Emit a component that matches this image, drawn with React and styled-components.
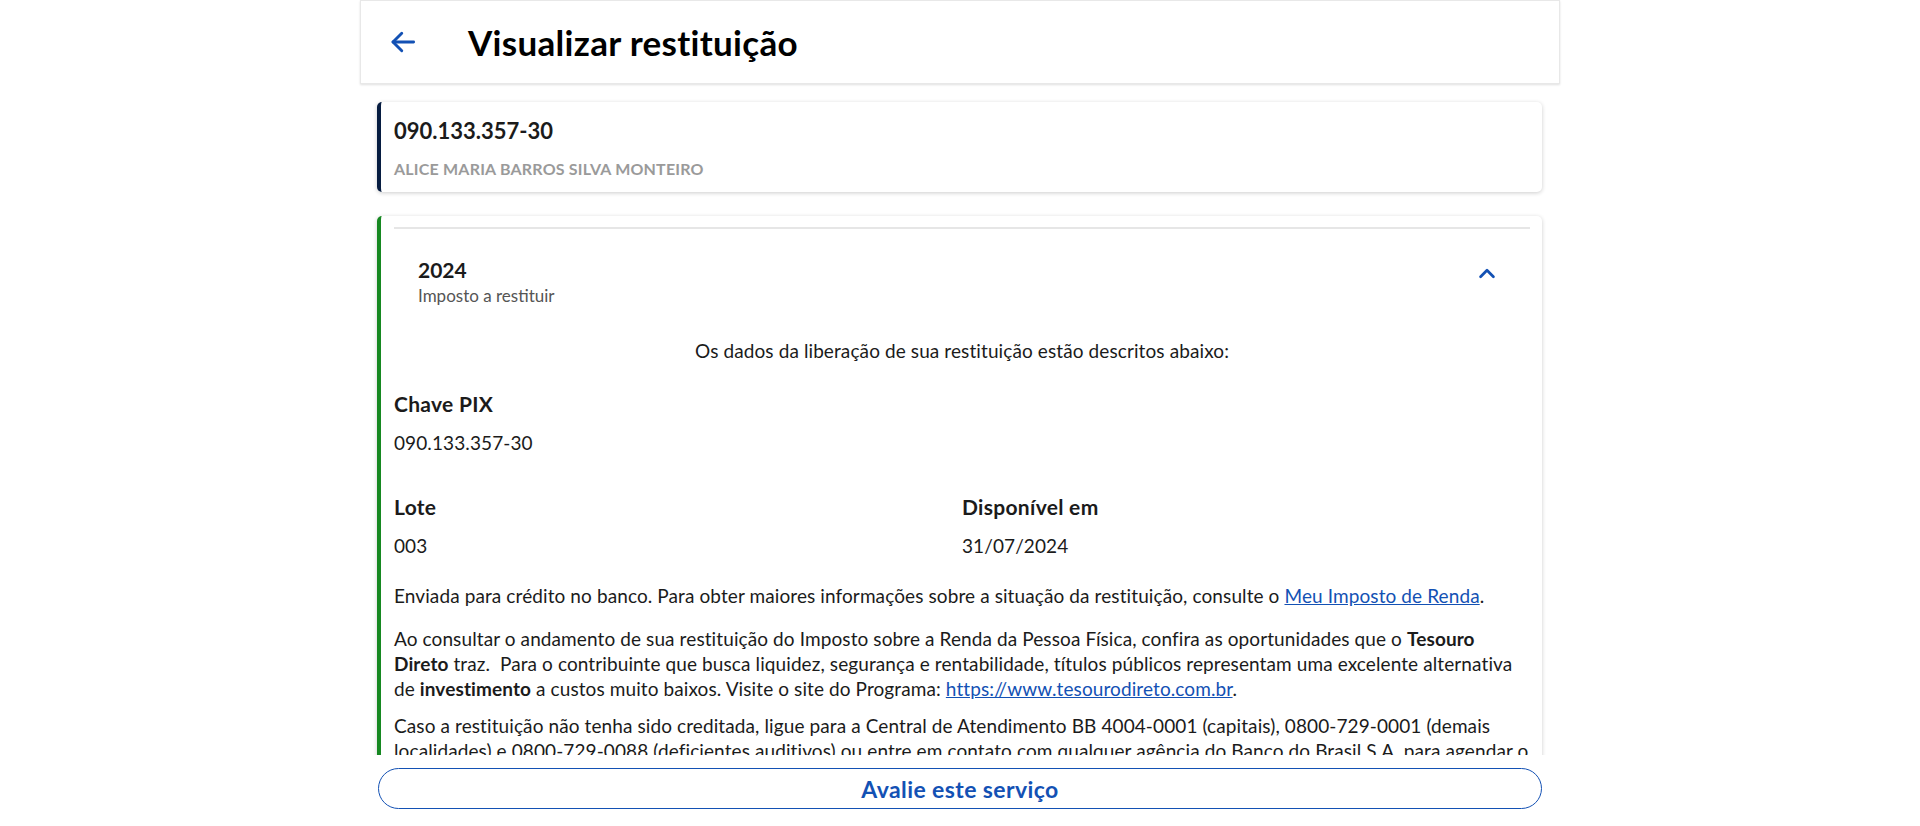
import React from "react";
import styled, { createGlobalStyle } from "styled-components";

const GlobalStyle = createGlobalStyle`
  html, body {
    margin: 0;
    padding: 0;
    background: #fff;
    font-family: Lato, "Open Sans", Arial, sans-serif;
    color: #1b1b1b;
  }
  * { box-sizing: border-box; }
`;

const Page = styled.div`
  width: 1200px;
  height: 100vh;
  margin: 0 auto;
  display: flex;
  flex-direction: column;
`;

const Header = styled.header`
  height: 84px;
  flex-shrink: 0;
  display: flex;
  align-items: center;
  border: 1px solid #e8e8e8;
  box-shadow: 0 1px 2px rgba(0, 0, 0, 0.12);
  padding-left: 27px;
`;

const BackButton = styled.button`
  border: none;
  background: none;
  padding: 0;
  width: 30px;
  height: 30px;
  display: flex;
  align-items: center;
  justify-content: center;
  color: #1351b4;
  cursor: pointer;
  margin-right: 50px;
`;

const Title = styled.h1`
  margin: 0;
  font-size: 35px;
  font-weight: 700;
  color: #000;
  letter-spacing: 0.3px;
`;

const Main = styled.main`
  flex: 1;
  overflow: hidden;
  padding: 18px 18px 0 17px;
  display: flex;
  flex-direction: column;
  gap: 24px;
`;

const Card = styled.section`
  flex-shrink: 0;
  background: #fff;
  border-radius: 5px;
  border-left: 4px solid ${(p) => p.$accent};
  box-shadow: 0 1px 4px rgba(0, 0, 0, 0.2);
  padding: ${(p) => p.$pad};
`;

const Cpf = styled.div`
  font-size: 22px;
  font-weight: 700;
  color: #1b1b1b;
  line-height: 24px;
`;

const Name = styled.div`
  margin-top: 17px;
  font-size: 16px;
  font-weight: 700;
  color: #9a9a9a;
  line-height: 18px;
  letter-spacing: 0.2px;
`;

const Divider = styled.hr`
  margin: 0;
  border: none;
  border-top: 2px solid #e6e6e6;
`;

const AccordionHead = styled.div`
  display: flex;
  align-items: flex-start;
  justify-content: space-between;
  padding: 29px 32px 0 24px;
`;

const Year = styled.div`
  font-size: 21px;
  font-weight: 700;
  line-height: 24px;
`;

const Sub = styled.div`
  margin-top: 4px;
  font-size: 17px;
  color: #555;
  line-height: 20px;
`;

const Chevron = styled.div`
  color: #1351b4;
  margin-top: 5px;
  display: flex;
`;

const Lead = styled.p`
  margin: 33px 0 0;
  text-align: center;
  font-size: 19px;
  line-height: 24px;
  letter-spacing: 0.1px;
`;

const FieldGrid = styled.div`
  display: grid;
  grid-template-columns: 1fr 1fr;
  margin-top: ${(p) => p.$top}px;
`;

const Label = styled.div`
  font-size: 21px;
  font-weight: 700;
  line-height: 24px;
  letter-spacing: 0.3px;
`;

const Value = styled.div`
  margin-top: 15px;
  font-size: 19px;
  line-height: 24px;
  letter-spacing: 0.1px;
`;

const Text = styled.p`
  margin: ${(p) => p.$top}px 0 0;
  font-size: 19px;
  line-height: 25px;
  letter-spacing: 0.1px;
`;

const Link = styled.a`
  color: #1351b4;
  text-decoration: underline;
`;

const Footer = styled.footer`
  height: 71px;
  flex-shrink: 0;
  padding: 13px 18px 0 18px;
  background: #fff;
`;

const RateButton = styled.button`
  width: 100%;
  height: 41px;
  border: 1px solid #1351b4;
  border-radius: 21px;
  background: #fff;
  color: #1351b4;
  font-family: Lato, "Open Sans", Arial, sans-serif;
  font-size: 23px;
  font-weight: 700;
  letter-spacing: 0.4px;
  cursor: pointer;
`;

export default function App() {
  return (
    <>
      <GlobalStyle />
      <Page>
        <Header>
          <BackButton aria-label="Voltar">
            <svg width="30" height="30" viewBox="0 0 24 24" fill="none" stroke="currentColor" strokeWidth="2.3" strokeLinecap="round" strokeLinejoin="round">
              <path d="M20.5 12H4" />
              <path d="M11 5l-7 7 7 7" />
            </svg>
          </BackButton>
          <Title>Visualizar restituição</Title>
        </Header>
        <Main>
          <Card $accent="#071d41" $pad="17px 16px 14px 13px">
            <Cpf>090.133.357-30</Cpf>
            <Name>ALICE MARIA BARROS SILVA MONTEIRO</Name>
          </Card>
          <Card $accent="#168821" $pad="11px 12px 0 13px">
            <Divider />
            <AccordionHead>
              <div>
                <Year>2024</Year>
                <Sub>Imposto a restituir</Sub>
              </div>
              <Chevron>
                <svg width="22" height="22" viewBox="0 0 24 24" fill="none" stroke="currentColor" strokeWidth="3" strokeLinecap="round" strokeLinejoin="round">
                  <path d="M5 15l7-7 7 7" />
                </svg>
              </Chevron>
            </AccordionHead>
            <Lead>Os dados da liberação de sua restituição estão descritos abaixo:</Lead>
            <FieldGrid $top={29}>
              <div>
                <Label>Chave PIX</Label>
                <Value>090.133.357-30</Value>
              </div>
            </FieldGrid>
            <FieldGrid $top={40}>
              <div>
                <Label>Lote</Label>
                <Value>003</Value>
              </div>
              <div>
                <Label>Disponível em</Label>
                <Value>31/07/2024</Value>
              </div>
            </FieldGrid>
            <Text $top={25}>
              Enviada para crédito no banco. Para obter maiores informações sobre a situação da restituição, consulte o{" "}
              <Link href="#">Meu Imposto de Renda</Link>.
            </Text>
            <Text $top={18}>
              Ao consultar o andamento de sua restituição do Imposto sobre a Renda da Pessoa Física, confira as oportunidades que o{" "}
              <b>Tesouro Direto</b> traz.&nbsp; Para o contribuinte que busca liquidez, segurança e rentabilidade, títulos públicos
              representam uma excelente alternativa de <b>investimento</b> a custos muito baixos. Visite o site do Programa:{" "}
              <Link href="#">https://www.tesourodireto.com.br</Link>.
            </Text>
            <Text $top={12}>
              Caso a restituição não tenha sido creditada, ligue para a Central de Atendimento BB 4004-0001 (capitais), 0800-729-0001
              (demais localidades) e 0800-729-0088 (deficientes auditivos) ou entre em contato com qualquer agência do Banco do Brasil
              S.A. para agendar o crédito em conta corrente ou poupança, em seu nome, em qualquer banco.
            </Text>
          </Card>
        </Main>
        <Footer>
          <RateButton>Avalie este serviço</RateButton>
        </Footer>
      </Page>
    </>
  );
}
